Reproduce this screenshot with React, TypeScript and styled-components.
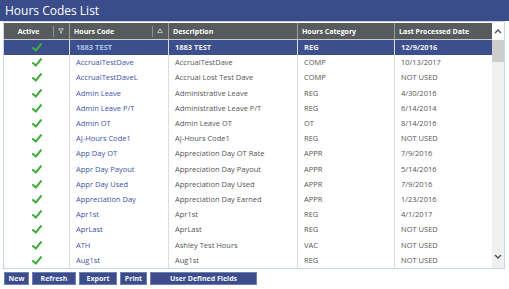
import styled, { createGlobalStyle } from "styled-components";

interface IHoursCode {
  code: string;
  description: string;
  category: string;
  lastProcessed: string;
}

const rows: IHoursCode[] = [
  { code: "1883 TEST", description: "1883 TEST", category: "REG", lastProcessed: "12/9/2016" },
  { code: "AccrualTestDave", description: "AccrualTestDave", category: "COMP", lastProcessed: "10/13/2017" },
  { code: "AccrualTestDaveL", description: "Accrual Lost Test Dave", category: "COMP", lastProcessed: "NOT USED" },
  { code: "Admin Leave", description: "Administrative Leave", category: "REG", lastProcessed: "4/30/2016" },
  { code: "Admin Leave P/T", description: "Administrative Leave P/T", category: "REG", lastProcessed: "6/14/2014" },
  { code: "Admin OT", description: "Admin Leave OT", category: "OT", lastProcessed: "8/14/2016" },
  { code: "AJ-Hours Code1", description: "AJ-Hours Code1", category: "REG", lastProcessed: "NOT USED" },
  { code: "App Day OT", description: "Appreciation Day OT Rate", category: "APPR", lastProcessed: "7/9/2016" },
  { code: "Appr Day Payout", description: "Appreciation Day Payout", category: "APPR", lastProcessed: "5/14/2016" },
  { code: "Appr Day Used", description: "Appreciation Day Used", category: "APPR", lastProcessed: "7/9/2016" },
  { code: "Appreciation Day", description: "Appreciation Day Earned", category: "APPR", lastProcessed: "1/23/2016" },
  { code: "Apr1st", description: "Apr1st", category: "REG", lastProcessed: "4/1/2017" },
  { code: "AprLast", description: "AprLast", category: "REG", lastProcessed: "NOT USED" },
  { code: "ATH", description: "Ashley Test Hours", category: "VAC", lastProcessed: "NOT USED" },
  { code: "Aug1st", description: "Aug1st", category: "REG", lastProcessed: "NOT USED" },
];

const buttons = [
  { label: "New", width: 25 },
  { label: "Refresh", width: 44 },
  { label: "Export", width: 38 },
  { label: "Print", width: 27 },
  { label: "User Defined Fields", width: 107 },
];

function Check() {
  return (
    <svg width="10" height="9" viewBox="0 0 10 9">
      <path d="M1 5 L3.8 7.6 L9 1.2" fill="none" stroke="#3fae3a" strokeWidth="2.1" strokeLinecap="round" strokeLinejoin="round" />
    </svg>
  );
}

function FilterIcon() {
  return (
    <svg width="6" height="6" viewBox="0 0 6 6">
      <path d="M0.5 0.8 H5.5 L3.4 3.2 V5.4 L2.6 4.8 V3.2 Z" fill="none" stroke="#d8dada" strokeWidth="0.8" />
    </svg>
  );
}

function SortIcon() {
  return (
    <svg width="6" height="6" viewBox="0 0 6 6">
      <path d="M3 0.8 L5.4 4.6 H0.6 Z" fill="none" stroke="#d8dada" strokeWidth="0.8" />
    </svg>
  );
}

function Chevron({ down }: { down?: boolean }) {
  return (
    <svg width="8" height="5" viewBox="0 0 8 5">
      <path d={down ? "M1 1 L4 4 L7 1" : "M1 4 L4 1 L7 4"} fill="none" stroke="#505050" strokeWidth="1.4" />
    </svg>
  );
}

function App() {
  return (
    <Page>
      <GlobalStyle />
      <TitleBar>Hours Codes List</TitleBar>
      <Grid>
        <Main>
          <HeaderRow>
            <HeadCell $center>
              <HeadLabel $center>Active</HeadLabel>
              <HeadTool><FilterIcon /></HeadTool>
            </HeadCell>
            <HeadCell>
              <HeadLabel>Hours Code</HeadLabel>
              <HeadTool><SortIcon /></HeadTool>
            </HeadCell>
            <HeadCell><HeadLabel>Description</HeadLabel></HeadCell>
            <HeadCell><HeadLabel>Hours Category</HeadLabel></HeadCell>
            <HeadCell $last><HeadLabel>Last Processed Date</HeadLabel></HeadCell>
          </HeaderRow>
          <Body>
            {rows.map((r, i) => (
              <Row key={r.code} $selected={i === 0}>
                <CheckCell><Check /></CheckCell>
                <Cell $code $selected={i === 0}>{r.code}</Cell>
                <Cell $selected={i === 0}>{r.description}</Cell>
                <Cell $selected={i === 0}>{r.category}</Cell>
                <Cell $selected={i === 0} $last>{r.lastProcessed}</Cell>
              </Row>
            ))}
          </Body>
        </Main>
        <ScrollBar>
          <ScrollHead><Chevron /></ScrollHead>
          <Track>
            <Thumb />
            <TrackEnd><Chevron down /></TrackEnd>
          </Track>
        </ScrollBar>
      </Grid>
      <ButtonBar>
        {buttons.map(b => (
          <Button key={b.label} style={{ width: b.width }}>{b.label}</Button>
        ))}
      </ButtonBar>
    </Page>
  );
}

const GlobalStyle = createGlobalStyle`
  body {
    margin: 0;
    background: #ffffff;
    font-family: "Open Sans", "Liberation Sans", sans-serif;
  }
`;

const Page = styled.div`
  width: 509px;
  height: 289px;
  overflow: hidden;
  background: #ffffff;
`;

const TitleBar = styled.div`
  height: 21px;
  background: #3b4c8a;
  color: #ffffff;
  font-size: 12px;
  line-height: 21px;
  padding-left: 5px;
  box-sizing: border-box;
`;

const Grid = styled.div`
  display: flex;
  margin: 0 4px 0 3px;
  border: 1px solid #c9d4ea;
  padding-top: 1px;
`;

const Main = styled.div`
  width: 488px;
`;

const columns = "66px 99px 129px 97px 97px";

const HeaderRow = styled.div`
  display: grid;
  grid-template-columns: ${columns};
  height: 17px;
  background: #575b5b;
  border-bottom: 1px solid #c8cccc;
  box-sizing: border-box;
`;

const HeadCell = styled.div<{ $center?: boolean; $last?: boolean }>`
  display: flex;
  align-items: center;
  border-right: ${p => (p.$last ? "none" : "1px solid #9a9e9e")};
  padding-left: ${p => (p.$center ? "0" : "4px")};
  color: #ffffff;
  font-size: 7px;
  font-weight: 700;
  overflow: hidden;
`;

const HeadLabel = styled.span<{ $center?: boolean }>`
  flex: 1;
  text-align: ${p => (p.$center ? "center" : "left")};
  white-space: nowrap;
`;

const HeadTool = styled.span`
  width: 13px;
  height: 11px;
  margin-right: 2px;
  border-left: 1px solid #8d9191;
  display: flex;
  align-items: center;
  justify-content: center;
`;

const Body = styled.div`
  height: 228px;
  overflow: hidden;
`;

const Row = styled.div<{ $selected?: boolean }>`
  display: grid;
  grid-template-columns: ${columns};
  height: 15.2px;
  background: ${p => (p.$selected ? "#3c4e8b" : "#ffffff")};
`;

const CheckCell = styled.div`
  display: flex;
  align-items: center;
  justify-content: center;
  border-right: 1px solid #dcdcdc;
`;

const Cell = styled.div<{ $code?: boolean; $selected?: boolean; $last?: boolean }>`
  display: flex;
  align-items: center;
  padding-left: 6px;
  border-right: ${p => (p.$last ? "none" : "1px solid #dcdcdc")};
  font-size: 7.5px;
  line-height: 9px;
  white-space: nowrap;
  overflow: hidden;
  font-weight: ${p => (p.$selected ? 700 : 400)};
  color: ${p =>
    p.$selected ? (p.$code ? "#a8c2ee" : "#eef2fb") : p.$code ? "#3c54a6" : "#555555"};
`;

const ScrollBar = styled.div`
  width: 12px;
  display: flex;
  flex-direction: column;
`;

const ScrollHead = styled.div`
  height: 17px;
  display: flex;
  align-items: center;
  justify-content: center;
`;

const Track = styled.div`
  flex: 1;
  background: #f0f0f0;
  display: flex;
  flex-direction: column;
`;

const Thumb = styled.div`
  height: 22px;
  background: #cdcdcd;
`;

const TrackEnd = styled.div`
  margin-top: auto;
  height: 24px;
  display: flex;
  align-items: center;
  justify-content: center;
`;

const ButtonBar = styled.div`
  display: flex;
  gap: 3px;
  padding: 3px 0 0 4px;
`;

const Button = styled.div`
  height: 13px;
  box-sizing: border-box;
  background: #3b4d8b;
  border: 1px solid #7080b4;
  color: #f4f6fc;
  font-size: 7px;
  font-weight: 700;
  display: flex;
  align-items: center;
  justify-content: center;
  white-space: nowrap;
`;

export default App;
